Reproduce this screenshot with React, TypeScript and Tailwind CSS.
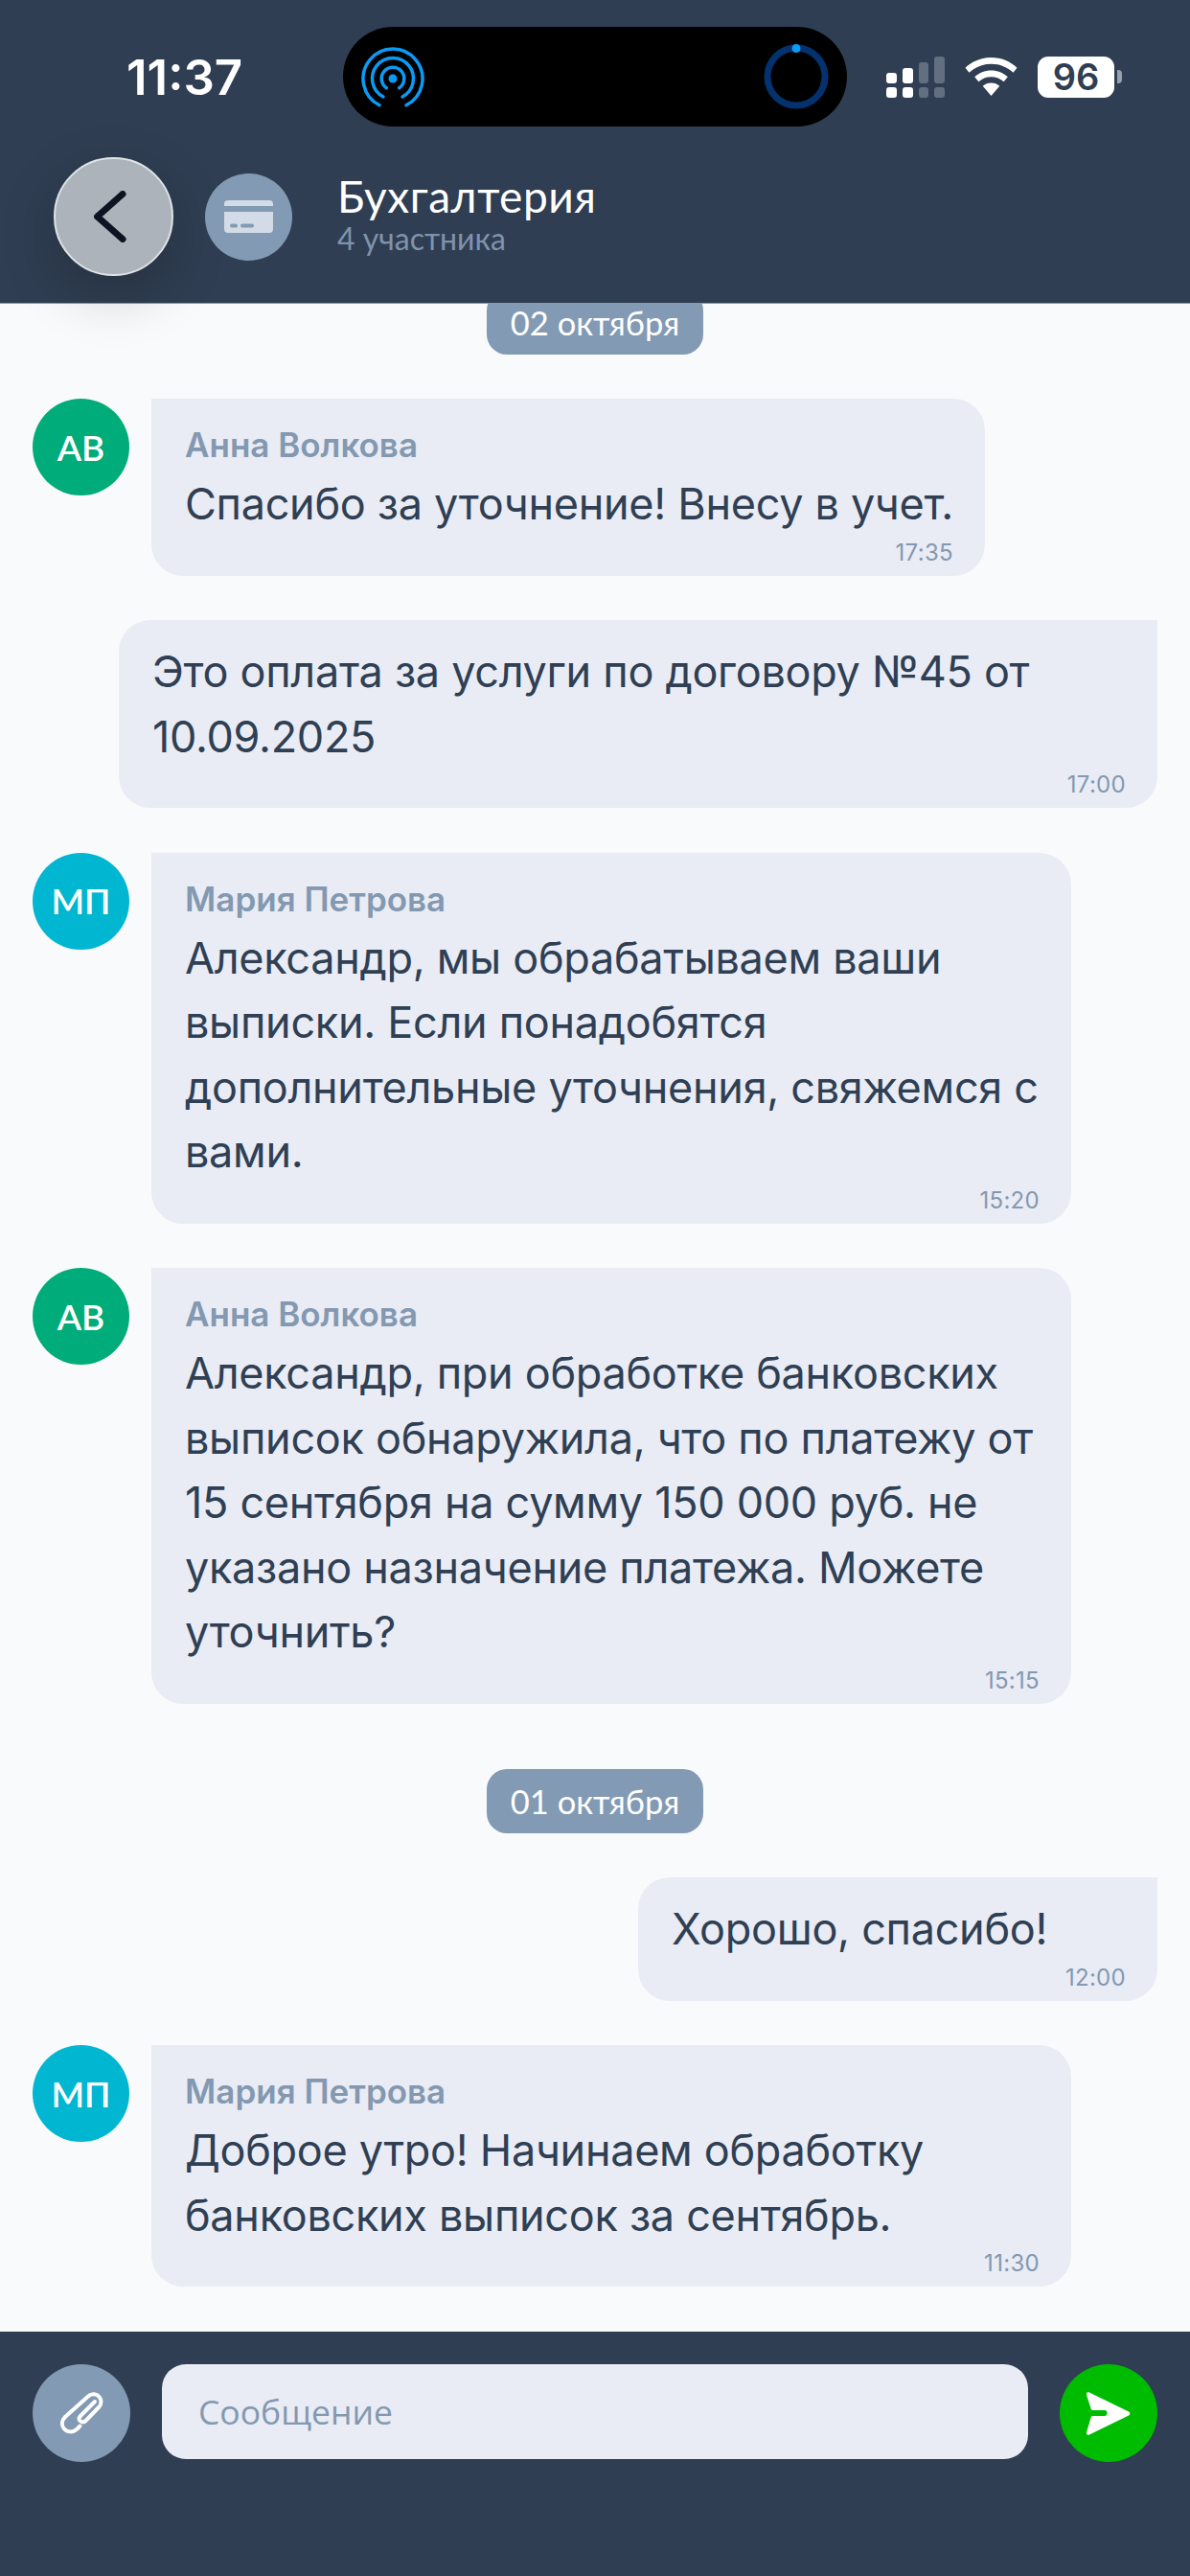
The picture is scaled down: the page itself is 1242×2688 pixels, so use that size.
const messages = [
  { day: "02 октября" },
  { id: 1, initials: "АВ", color: "bg-[#00ac79]", name: "Анна Волкова", text: "Спасибо за уточнение! Внесу в учет.", time: "17:35" },
  { id: 2, own: true, text: "Это оплата за услуги по договору №45 от 10.09.2025", time: "17:00" },
  { id: 3, initials: "МП", color: "bg-[#00b6d1]", name: "Мария Петрова", text: "Александр, мы обрабатываем ваши выписки. Если понадобятся дополнительные уточнения, свяжемся с вами.", time: "15:20" },
  { id: 4, initials: "АВ", color: "bg-[#00ac79]", name: "Анна Волкова", text: "Александр, при обработке банковских выписок обнаружила, что по платежу от 15 сентября на сумму 150 000 руб. не указано назначение платежа. Можете уточнить?", time: "15:15" },
  { day: "01 октября" },
  { id: 5, own: true, text: "Хорошо, спасибо!", time: "12:00" },
  { id: 6, initials: "МП", color: "bg-[#00b6d1]", name: "Мария Петрова", text: "Доброе утро! Начинаем обработку банковских выписок за сентябрь.", time: "11:30" },
];

function StatusBar() {
  return (
    <div className="flex h-[164px] items-center pb-[4px] pl-[132px] pr-[71px] font-['Inter',sans-serif]">
      <span className="w-[226px] text-[51px] font-semibold leading-none text-white">11:37</span>
      {/* Dynamic island */}
      <div className="flex h-[104px] w-[526px] items-center justify-between rounded-[52px] bg-black pl-[19px] pr-[19px]">
        <svg className="mt-[4px]" width="66" height="66" viewBox="0 0 66 66" fill="none" stroke="#0a9bf5" strokeWidth="3.5" strokeLinecap="round">
          <path d="M19 60.700A31 31 0 1 1 47 60.700" />
          <path d="M23 52A21.500 21.500 0 1 1 43 52" />
          <path d="M26.300 42.700A11.800 11.800 0 1 1 39.700 42.700" />
          <circle cx="33" cy="33" r="4.500" fill="#0a9bf5" stroke="none" />
        </svg>
        <svg width="68" height="68" viewBox="0 0 68 68" fill="none">
          <circle cx="34" cy="34" r="30" stroke="#03326f" strokeWidth="7" />
          <circle cx="34" cy="4.500" r="4.500" fill="#0a9bf5" />
        </svg>
      </div>
      {/* Signal, wifi, battery */}
      <div className="ml-[41px] flex items-center">
        <div className="flex h-[43px] w-[61px] flex-col justify-end gap-[4px]">
          <div className="flex items-end gap-[6px]">
            <span className="h-[11px] w-[12px] rounded-[3px] bg-white" />
            <span className="h-[16px] w-[12px] rounded-[3px] bg-white" />
            <span className="h-[22px] w-[12px] rounded-[3px] bg-[#626f80]" />
            <span className="h-[28px] w-[12px] rounded-[3px] bg-[#626f80]" />
          </div>
          <div className="flex gap-[6px]">
            <span className="h-[11px] w-[12px] rounded-[3px] bg-white" />
            <span className="h-[11px] w-[12px] rounded-[3px] bg-white" />
            <span className="h-[11px] w-[12px] rounded-[3px] bg-[#626f80]" />
            <span className="h-[11px] w-[12px] rounded-[3px] bg-[#626f80]" />
          </div>
        </div>
        <svg className="ml-[21px]" width="55" height="40" viewBox="0 0 55 40" fill="white">
          <path d="M27.500 0C17 0 7.700 4 .5 10.700l4 5C10.500 10.200 18.500 6.800 27.500 6.800S44.500 10.200 50.500 15.700l4-5C47.300 4 38 0 27.500 0z" />
          <path d="M27.500 13.500c-6.700 0-12.700 2.500-17.300 6.700l4.200 5.100c3.400-3.200 8-5.100 13.100-5.100s9.700 1.900 13.100 5.100l4.200-5.100C40.200 16 34.200 13.500 27.500 13.500z" />
          <path d="M27.500 26.500c-3.400 0-6.500 1.200-8.800 3.300L27.500 40l8.800-10.200c-2.300-2.100-5.400-3.300-8.800-3.300z" />
        </svg>
        <div className="ml-[21px] flex h-[43px] w-[80px] items-center justify-center rounded-[11px] bg-white text-[38px] font-semibold leading-none text-[#2f3e52]">96</div>
        <span className="ml-[3px] h-[14px] w-[5px] rounded-r-[4px] bg-[#97a0ab]" />
      </div>
    </div>
  );
}

function Header() {
  return (
    <header className="relative z-10 h-[317px] shrink-0 border-b border-[#8d98a3] bg-[#2f3e52]">
      <StatusBar />
      <div className="flex items-center pl-[56px]">
        <button className="flex h-[124px] w-[125px] items-center justify-center rounded-full border-[2px] border-[#dfe3e8] bg-[#adb3bb] pr-[7px] shadow-[0_20px_60px_rgba(0,0,0,0.2)]">
          <svg width="34" height="54" viewBox="0 0 34 54" fill="none" stroke="#0b1420" strokeWidth="7" strokeLinecap="round" strokeLinejoin="round">
            <path d="M30 3.500L3.500 27L30 50.500" />
          </svg>
        </button>
        <div className="ml-[33px] flex h-[91px] w-[91px] items-center justify-center rounded-full bg-[#829ab3]">
          <svg width="51" height="34" viewBox="0 0 51 34" fill="#d3dbe7">
            <path d="M0 4a4 4 0 0 1 4-4h43a4 4 0 0 1 4 4v2H0z" />
            <path fillRule="evenodd" d="M0 12h51v18a4 4 0 0 1-4 4H4a4 4 0 0 1-4-4zM8 24.500a2 2 0 0 0 0 4h4a2 2 0 0 0 0-4zm11 0a2 2 0 0 0 0 4h10a2 2 0 0 0 0-4z" />
          </svg>
        </div>
        <div className="ml-[47px] pb-[6px] font-['Lato',sans-serif]">
          <div className="text-[46px] leading-[52px] tracking-[0.6px] text-white">Бухгалтерия</div>
          <div className="text-[32px] leading-[36px] text-[#7f93ab]">4 участника</div>
        </div>
      </div>
    </header>
  );
}

function DayPill({ label }: { label: string }) {
  return (
    <div className="flex justify-center">
      <span className="rounded-[21px] bg-[#829ab3] px-[25px] font-['Lato',sans-serif] text-[34.5px] leading-[67px] text-white">{label}</span>
    </div>
  );
}

function Bubble({ msg }: { msg: any }) {
  if (msg.own) {
    return (
      <div className="flex justify-end pr-[34px]">
        <div className="min-w-[542px] max-w-[1084px] rounded-b-[33px] rounded-tl-[33px] bg-[#e9ecf4] pb-[9px] pl-[35px] pr-[33px] pt-[20px]">
          <p className="text-[45px] leading-[67.5px] tracking-[-0.3px] text-[#2f3f54]">{msg.text}</p>
          <div className="mt-[2px] text-right text-[24px] leading-[30px] tracking-[0.3px] text-[#8398b1]">{msg.time}</div>
        </div>
      </div>
    );
  }
  return (
    <div className="flex items-start gap-[23px] pl-[34px]">
      <div className={`flex h-[101px] w-[101px] shrink-0 items-center justify-center rounded-full ${msg.color} font-['Lato',sans-serif] text-[37px] font-semibold text-white`}>
        {msg.initials}
      </div>
      <div className="max-w-[960px] rounded-r-[33px] rounded-bl-[33px] bg-[#e9ecf4] pb-[9px] pl-[35px] pr-[33px] pt-[20px]">
        <div className="mb-[5px] mt-[6px] text-[35px] font-semibold leading-[45px] text-[#8398b1]">{msg.name}</div>
        <p className="text-[45px] leading-[67.5px] tracking-[-0.3px] text-[#2f3f54]">{msg.text}</p>
        <div className="mt-[2px] text-right text-[24px] leading-[30px] tracking-[0.3px] text-[#8398b1]">{msg.time}</div>
      </div>
    </div>
  );
}

function Composer() {
  return (
    <footer className="flex h-[255px] shrink-0 items-start gap-[33px] bg-[#2f3e52] px-[34px] pt-[34px]">
      <button className="flex h-[102px] w-[102px] shrink-0 items-center justify-center rounded-full bg-[#829ab3]">
        <svg width="46" height="46" viewBox="0 0 46 46" fill="none" stroke="white" strokeWidth="4" strokeLinecap="round" strokeLinejoin="round">
          <path d="M37 11L22 26c-2 2-2 4 0 5.500s4 1 5.500-.5L41 17c3.500-3.500 3-8 .5-11s-8-4-11.500-.5L6 27c-4 4-4 9-1 12.500s9 4 13 .5l3.500-3.500" />
        </svg>
      </button>
      <div className="flex h-[99px] flex-1 items-center rounded-[25px] bg-[#e9ecf4] pl-[38px] font-['Open_Sans',sans-serif] text-[35.5px] text-[#8398b1]">Сообщение</div>
      <button className="flex h-[102px] w-[102px] shrink-0 items-center justify-center rounded-full bg-[#00bc00]">
        <svg width="46" height="45" viewBox="0 0 46 45" fill="white">
          <path d="M3 .5L44 20.500a2.200 2.200 0 0 1 0 4L3 44.500c-2 1-3.500-.5-3-2.500L4.500 27c.3-1.500 1-2 2-2H19c3.500 0 3.500-6 0-6H6.500c-1 0-1.700-.5-2-2L0 3C-.5 1 1-.5 3 .5z" />
        </svg>
      </button>
    </footer>
  );
}

export default function App() {
  return (
    <div className="flex h-[2688px] w-[1242px] flex-col overflow-hidden bg-[#f9fafc] font-['Inter',sans-serif]">
      <Header />
      <main className="flex min-h-0 flex-1 flex-col justify-end gap-[46.5px] overflow-hidden pb-[47px]">
        {messages.map((m, i) =>
          m.day ? (
            <div key={i} className={i > 0 ? "pt-[21.5px]" : ""}>
              <DayPill label={m.day} />
            </div>
          ) : (
            <Bubble key={i} msg={m} />
          )
        )}
      </main>
      <Composer />
    </div>
  );
}
